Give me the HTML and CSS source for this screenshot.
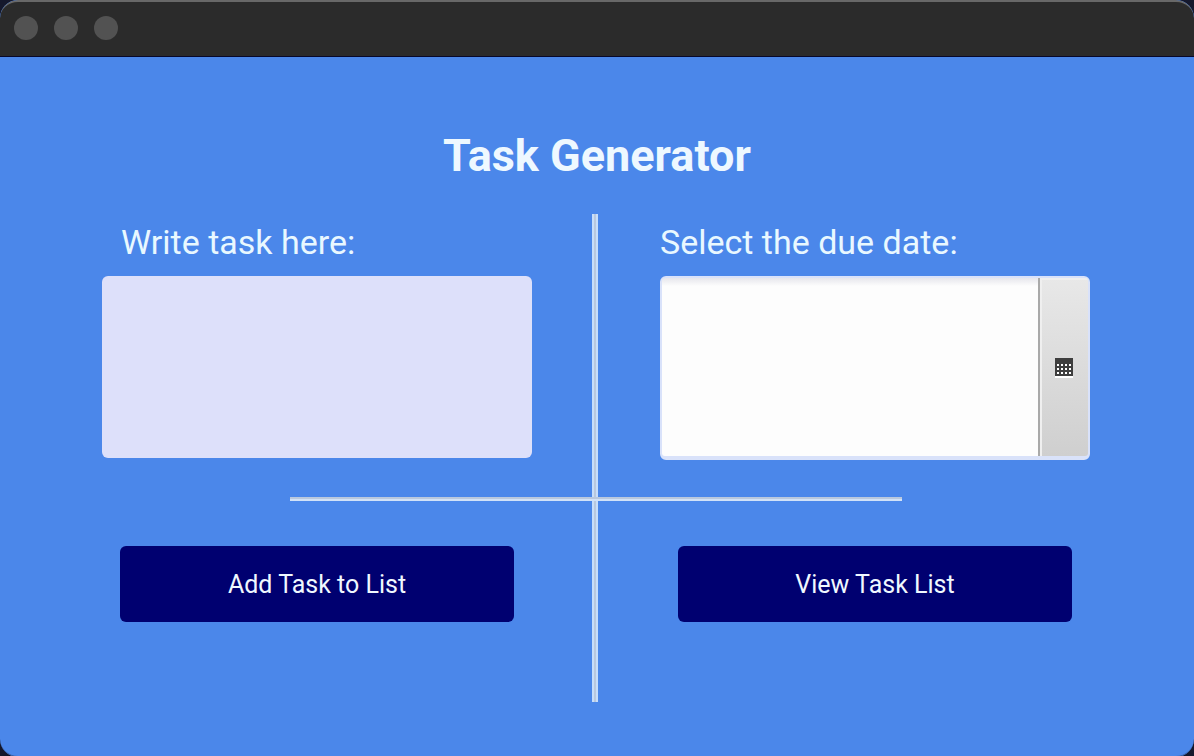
FILE: index.html
```html
<!DOCTYPE html>
<html lang="en">
<head>
<meta charset="utf-8">
<title>Task Generator</title>
<link rel="stylesheet" href="styles.css">
</head>
<body>
<div class="window">
  <header class="titlebar">
    <span class="dot"></span><span class="dot"></span><span class="dot"></span>
  </header>
  <main class="content">
    <h1 class="title">Task Generator</h1>
    <form class="board">
      <div class="field field-task">
        <label class="label label-task" for="task">Write task here:</label>
        <input class="task-input" id="task" type="text">
      </div>
      <div class="field field-date">
        <label class="label" for="due">Select the due date:</label>
        <div class="date-picker">
          <input class="date-input" id="due" type="text">
          <button class="date-button" type="button" aria-label="Open calendar">
            <svg class="calendar" viewBox="0 0 18 20" width="18" height="20" shape-rendering="crispEdges" aria-hidden="true">
              <rect width="18" height="20" fill="#fff"/>
              <rect width="18" height="18" fill="#3e3e3e"/>
              <path fill="#fff" d="M2 6h2v2H2zM6 6h2v2H6zM10 6h2v2h-2zM14 6h2v2h-2zM2 10h2v2H2zM6 10h2v2H6zM10 10h2v2h-2zM14 10h2v2h-2zM2 14h2v2H2zM6 14h2v2H6zM10 14h2v2h-2zM14 14h2v2h-2z"/>
            </svg>
          </button>
        </div>
      </div>
      <div class="rule-vertical"></div>
      <hr class="rule-horizontal">
      <button class="action action-add" type="button">Add Task to List</button>
      <button class="action action-view" type="button">View Task List</button>
    </form>
  </main>
</div>
</body>
</html>
```

FILE: styles.css
```css
* {
  box-sizing: border-box;
}

body {
  margin: 0;
  background: #15182c;
  color: #e9f8ff;
  font-family: Roboto, Inter, "Liberation Sans", sans-serif;
}

.window {
  display: flex;
  flex-direction: column;
  min-height: 100vh;
  overflow: hidden;
  border-radius: 18px;
  background: #4b87ea;
}

.titlebar {
  display: flex;
  align-items: center;
  gap: 16px;
  height: 57px;
  padding: 0 14px 2px;
  border-top: 2px solid #686868;
  border-bottom: 1px solid #08082a;
  border-radius: 18px 18px 0 0;
  background: #2b2b2b;
}

.dot {
  width: 24px;
  height: 24px;
  border-radius: 50%;
  background: #525252;
}

.content {
  flex: 1;
  padding: 70px 102px 54px;
  border-bottom: 1px solid #375b9b;
  border-radius: 0 0 18px 18px;
}

.title {
  margin: 0 0 29px;
  font-size: 45px;
  font-weight: 700;
  line-height: 58px;
  text-align: center;
  color: #eef8ff;
}

.board {
  display: grid;
  grid-template-columns: 1fr 8px 1fr;
  grid-template-rows: auto 4px auto 1fr;
  column-gap: 60px;
  padding-right: 2px;
}

.field {
  display: flex;
  flex-direction: column;
  grid-row: 1;
  padding-bottom: 37px;
}

.field-task {
  grid-column: 1;
}

.field-date {
  grid-column: 3;
}

.label {
  height: 62px;
  padding-top: 6px;
  font-size: 34px;
  line-height: 44px;
}

.label-task {
  padding-left: 19px;
}

.task-input {
  width: 100%;
  height: 182px;
  padding: 0 16px;
  border: 0;
  border-radius: 6px;
  background: #dde0fa;
  font: inherit;
}

.date-picker {
  display: flex;
  height: 184px;
  border: 2px solid #d9e2fa;
  border-bottom-width: 4px;
  border-radius: 6px;
  background: #d9e2fa;
}

.date-input {
  flex: 1;
  min-width: 0;
  padding: 0 16px;
  border: 0;
  border-radius: 3px 0 0 3px;
  background: linear-gradient(#e6e6ec, #fdfdfd 8px);
  font: inherit;
}

.date-button {
  display: grid;
  place-items: center;
  width: 50px;
  padding: 2px 0 0;
  border: 0;
  border-left: 2px solid #a9a9a9;
  border-radius: 0 3px 3px 0;
  background: linear-gradient(#e8e8e8, #cfcfcf);
  box-shadow: inset 2px 2px #efefef;
}

.rule-vertical {
  grid-row: 1 / 5;
  grid-column: 2;
  width: 6px;
  height: 488px;
  border: solid #c8defa;
  border-width: 0 2px;
  background: #b9c8de;
}

.rule-horizontal {
  grid-row: 2;
  grid-column: 1 / 4;
  justify-self: center;
  width: 62%;
  height: 4px;
  margin: 0;
  border: 0;
  background: linear-gradient(#b9c8de 50%, #d2e2f8 50%);
}

.action {
  grid-row: 3;
  height: 76px;
  margin: 45px 18px 0;
  border: 0;
  border-radius: 6px;
  background: #000070;
  color: #f0f8ff;
  font: 25px Roboto, Inter, "Liberation Sans", sans-serif;
}

.action-add {
  grid-column: 1;
}

.action-view {
  grid-column: 3;
}
```
